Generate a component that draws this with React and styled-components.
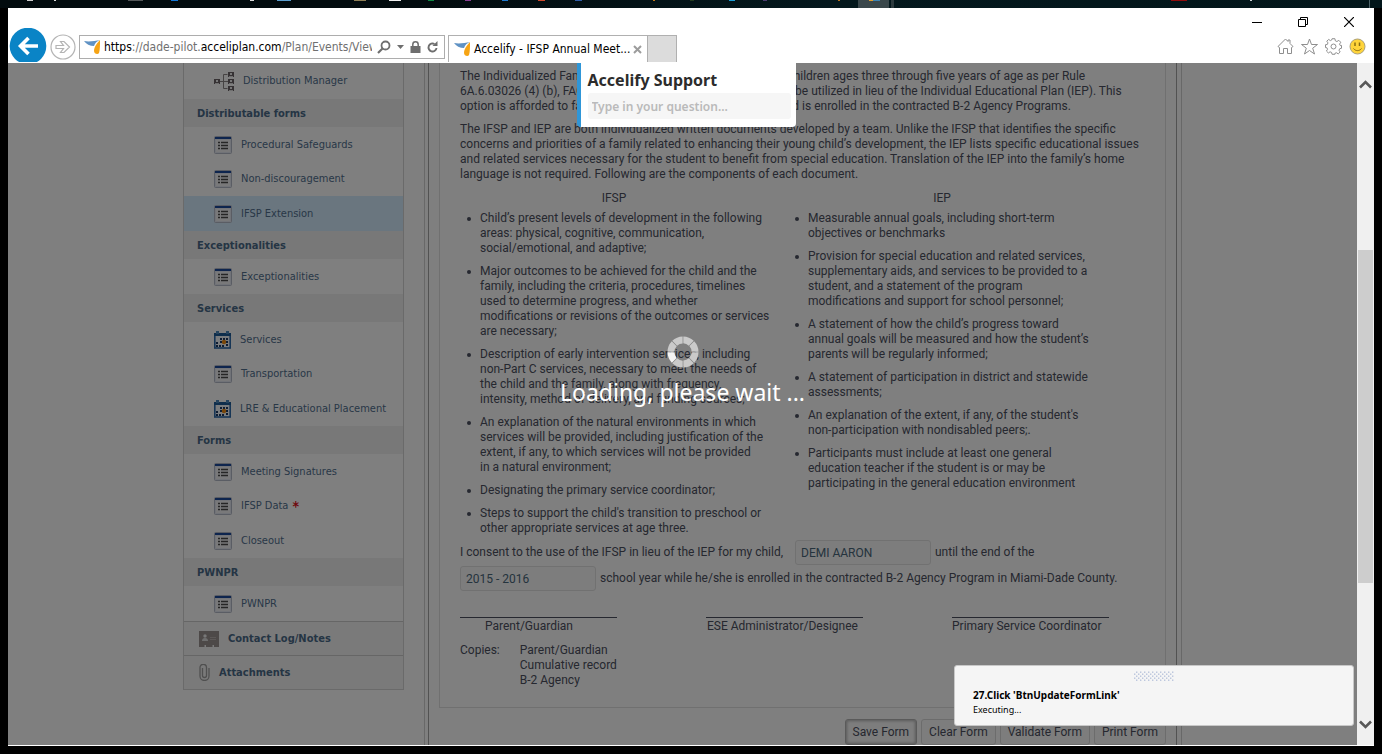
import React from 'react';
import styled, { createGlobalStyle } from 'styled-components';

const GlobalStyle = createGlobalStyle`
  * { box-sizing: border-box; }
  html, body { margin: 0; padding: 0; background: #000; }
  ul, h1, h2, h3, p { margin: 0; padding: 0; }
  button, input { font: inherit; color: inherit; }
  svg { display: block; flex: none; }
  a { color: inherit; text-decoration: none; }
`;

const bodyFont = 'Roboto, "Liberation Sans", sans-serif';
const navFont = '"DejaVu Sans Condensed", "DejaVu Sans", sans-serif';
const uiFont = '"Noto Sans", "Open Sans", sans-serif';

/* ---------- desktop and window ---------- */

const Desktop = styled.div`
  display: flex;
  flex-direction: column;
  height: 100vh;
  background: #000;
`;

const Taskbar = styled.div`
  height: 8px;
  overflow: hidden;
  background: linear-gradient(90deg, #020b0e 0, #020b0e 30%, #04181d 60%, #02161a 100%);
`;

const BrowserWindow = styled.div`
  position: relative;
  flex: 1;
  min-height: 0;
  display: flex;
  flex-direction: column;
  margin: 0 8px 8px;
  padding-bottom: 1px;
  background: #fff;
`;

const Chrome = styled.header`
  display: flex;
  justify-content: space-between;
  height: 55px;
  padding-bottom: 1px;
`;

const NavBar = styled.div`
  display: flex;
  align-items: flex-end;
  min-width: 0;
  flex: 1;
`;

const RoundButton = styled.button`
  padding: 0;
  border: 0;
  background: none;
  margin: ${(p) => (p.$raised ? '0 3px 2px 3px' : '0 0 0 1px')};
`;

const AddressBar = styled.div`
  display: flex;
  align-items: center;
  flex: 0 1 366px;
  min-width: 0;
  height: 24px;
  margin-bottom: 3px;
  padding: 0 6px 0 4px;
  border: 1px solid #adadad;
  color: #707070;
  font: 12px/20px ${navFont};
`;

const Url = styled.div`
  flex: 1;
  min-width: 0;
  margin-left: 3px;
  overflow: hidden;
  white-space: nowrap;
  b { color: #000; font-weight: 400; }
`;

const AddressTools = styled.div`
  display: flex;
  align-items: center;
  gap: 6px;
  margin-left: 5px;
`;

const IconButton = styled.button`
  display: flex;
  padding: 0;
  border: 0;
  background: none;
`;

const Tabs = styled.div`
  display: flex;
  height: 27px;
  margin-left: 3px;
`;

const Tab = styled.div`
  display: flex;
  align-items: center;
  gap: 3px;
  width: 200px;
  padding: 0 6px 0 5px;
  border: 1px solid #b0b0b0;
  border-bottom: 0;
  color: #000;
  font: 12px/20px ${navFont};
  white-space: nowrap;
`;

const NewTab = styled.button`
  width: 29px;
  padding: 0;
  border: 1px solid #b0b0b0;
  border-width: 1px 1px 0 0;
  background: #dcdcdc;
`;

const ChromeRight = styled.div`
  display: flex;
  flex-direction: column;
  justify-content: space-between;
  align-items: flex-end;
`;

const WindowControls = styled.div`
  display: flex;
  padding-right: 2px;
`;

const WindowButton = styled.button`
  display: flex;
  align-items: center;
  justify-content: center;
  width: 46px;
  height: 28px;
  padding: 0;
  border: 0;
  background: none;
`;

const ToolIcons = styled.div`
  display: flex;
  gap: 7px;
  padding: 0 8px 7px 0;
`;

const Viewport = styled.div`
  flex: 1;
  min-height: 0;
  display: flex;
`;

const Page = styled.div`
  position: relative;
  flex: 1;
  min-width: 0;
  overflow: hidden;
  background: #fff;
`;

/* ---------- scroll bar ---------- */

const ScrollBar = styled.div`
  display: flex;
  flex-direction: column;
  align-items: center;
  width: 17px;
  padding: 12px 0;
  background: #f0f0f0;
`;

const ScrollButton = styled.button`
  display: flex;
  align-items: center;
  justify-content: center;
  width: 17px;
  height: 18px;
  padding: 0;
  border: 0;
  background: none;
`;

const TrackPart = styled.div`
  flex: ${(p) => p.$share};
`;

const Thumb = styled.div`
  flex: 334;
  width: 15px;
  background: #cdcdcd;
`;

/* ---------- page ---------- */

const Columns = styled.div`
  display: flex;
  align-items: flex-start;
  gap: 20px;
  max-width: 999px;
  min-height: 100%;
  margin: 0 auto;
`;

const Sidebar = styled.nav`
  width: 221px;
  flex: none;
  border: 1px solid #d4d4d4;
  border-top: 0;
  color: #52708f;
  font: 11px/16px ${navFont};
`;

const GroupTitle = styled.h2`
  height: 28px;
  padding-left: 13px;
  background: #f0f0f0;
  color: #4a6a89;
  font-size: 11px;
  line-height: 29px;
`;

const Group = styled.ul`
  list-style: none;
  &:first-child { padding-bottom: 1px; }
`;

const Item = styled.li`
  height: 35px;
  background: ${(p) => (p.$active ? '#d4ecfe' : 'none')};
  &:nth-child(3n + 2) { height: 34px; }
`;

const ItemLink = styled.a`
  display: flex;
  align-items: center;
  gap: 9px;
  height: 100%;
  padding-left: 30px;
`;

const Required = styled.span`
  margin-left: -5px;
  color: #e01020;
  font-weight: 700;
  font-size: 14px;
`;

const SectionLink = styled.a`
  display: flex;
  align-items: center;
  gap: 9px;
  height: 34px;
  padding-left: 15px;
  border-top: 1px solid #ccc;
  background: #f4f4f4;
  color: #4a6a89;
  font-weight: 700;
`;

const Main = styled.main`
  flex: 1;
  align-self: stretch;
  min-width: 0;
  min-height: 682px;
  padding: 0 4px 0 3px;
  border: 1px solid #d0d0d0;
  border-width: 0 1px;
`;

const MainInner = styled.div`
  height: 100%;
  padding: 0 10px;
  border: 1px solid #a4a4a4;
  border-width: 0 1px;
`;

const Form = styled.form`
  padding: 6px 20px 19px;
  border: 1px solid #e0e0e0;
  border-top: 0;
  color: #4c5060;
  font: 12px/15px ${bodyFont};
`;

const Paragraph = styled.p`
  margin-bottom: 8px;
  white-space: nowrap;
`;

const Comparison = styled.div`
  display: flex;
  gap: 20px;
  margin-top: 9px;
`;

const Side = styled.section`
  width: 308px;
`;

const SideTitle = styled.h3`
  margin-bottom: 5px;
  font-size: 12px;
  font-weight: 400;
  text-align: center;
`;

const Bullets = styled.ul`
  display: flex;
  flex-direction: column;
  gap: 8px;
  list-style: none;
`;

const Bullet = styled.li`
  display: flex;
  align-items: flex-start;
  white-space: nowrap;
  &::before {
    content: '';
    flex: none;
    width: 4px;
    height: 4px;
    margin: 6px 9px 0 7px;
    border-radius: 50%;
    background: #4c5060;
  }
`;

const Consent = styled.div`
  display: flex;
  flex-direction: column;
  gap: 1px;
  margin-top: 4px;
`;

const ConsentLine = styled.label`
  display: flex;
  align-items: center;
  gap: 4px;
  white-space: nowrap;
`;

const ConsentLead = styled.span`
  min-width: 331px;
`;

const Field = styled.input`
  width: 136px;
  height: 25px;
  padding: 0 5px;
  border: 1px solid #e2e2e2;
  border-radius: 3px;
  background: #fafafa;
  color: #4a687c;
`;

const Signatures = styled.div`
  display: grid;
  grid-template-columns: repeat(3, 157px);
  column-gap: 89px;
  margin-top: 26px;
`;

const Signature = styled.div`
  padding: 1px ${(p) => p.$inset}px 0;
  border-top: 1px solid #4c5060;
  white-space: nowrap;
`;

const Copies = styled.div`
  display: flex;
  gap: 20px;
  margin-top: 9px;
  ul { list-style: none; }
`;

const Actions = styled.div`
  display: flex;
  justify-content: flex-end;
  gap: 4px;
  margin-top: 11px;
`;

const ActionButton = styled.button`
  height: 26px;
  padding: 0 7px;
  border: 1px solid ${(p) => (p.$focused ? '#b4b4b4' : '#d8d8d8')};
  border-radius: 3px;
  background: #fafafa;
  box-shadow: ${(p) => (p.$focused ? 'inset 0 0 3px 1px #b4b4b4' : 'none')};
  color: #4c5060;
  font: 12px/16px ${bodyFont};
`;

/* ---------- layers over the page ---------- */

const LoadingLayer = styled.div`
  position: absolute;
  inset: 0;
  display: flex;
  flex-direction: column;
  align-items: center;
  justify-content: center;
  gap: 7px;
  padding-bottom: 63px;
  background: rgba(0, 0, 0, 0.5);
  color: #fff;
  font: 23px/34px ${uiFont};
`;

const SupportBox = styled.div`
  position: absolute;
  top: 0;
  left: 50%;
  width: 219px;
  height: 64px;
  margin-left: -106px;
  padding: 4px 5px 7px 7px;
  border-left: 4px solid #2f96d8;
  border-radius: 0 0 4px 4px;
  background: #fff;
  label {
    display: block;
    color: #2c2c2c;
    font: 700 16px/26px ${uiFont};
  }
`;

const QuestionInput = styled.input`
  display: block;
  width: 100%;
  height: 26px;
  padding: 0 4px;
  border: 0;
  border-radius: 3px;
  background: #f6f6f6;
  font: 600 12px/20px ${uiFont};
  &::placeholder { color: #bababa; opacity: 1; }
`;

const Toast = styled.div`
  position: absolute;
  right: 20px;
  bottom: 20px;
  width: 400px;
  height: 61px;
  padding: 5px 18px;
  border: 1px solid #c8c8c8;
  border-radius: 3px;
  background: #f5f5f5;
  color: #000;
  font: 9px/14px ${uiFont};
  svg { margin: 0 auto 6px; }
  strong {
    display: block;
    font-size: 10px;
    line-height: 15px;
  }
`;

/* ---------- drawings ---------- */

const slivers = [
  [27, 6, 1, '#cfcfcf'], [54, 2, 1, '#ddd'], [128, 15, 1, '#55585a'], [171, 7, 1, '#1478d8'],
  [250, 4, 1, '#ddd'], [277, 14, 1, '#5c9fd0'], [354, 12, 1, '#8f7f56'], [389, 12, 1, '#f0f0f0'],
  [428, 6, 1, '#0f8a44'], [465, 6, 1, '#8a3f94'], [502, 6, 1, '#1f7ad0'], [538, 7, 1, '#d0492c'],
  [575, 7, 1, '#2f5ca8'], [653, 2, 1, '#c07818'], [690, 4, 1, '#243c20'], [729, 6, 1, '#1b9fd8'],
  [763, 4, 1, '#4c3c70'], [838, 2, 1, '#b8741c'], [858, 31, 8, '#3a474b'], [869, 4, 1, '#e0a030'],
  [873, 7, 1, '#3c84b4'], [891, 3, 8, '#2c3a3e'], [1171, 16, 1, '#900c0c'], [1250, 2, 1, '#cfd4d8'],
  [1369, 1, 8, '#4c6268'],
];

const TaskbarArt = () => (
  <svg width="1382" height="8" aria-hidden="true">
    {slivers.map(([x, w, h, c]) => <rect key={x} x={x} y="0" width={w} height={h} fill={c} />)}
  </svg>
);

const BrandMark = () => (
  <svg width="17" height="16" viewBox="0 0 17 16">
    <path d="M0 2C5 3 11 2 16 1c-3 1-5 3-6 6C6 7 2 5 0 2z" fill="#5f92c4" />
    <path d="M16 1c0 5 0 10-1 13-1 2-5 1-5-2 0-4 3-8 6-11z" fill="#f6a414" />
  </svg>
);

const FormIcon = () => (
  <svg width="18" height="18" viewBox="0 0 18 18">
    <rect x="0.5" y="0.5" width="17" height="17" rx="1" fill="#e2e6f0" stroke="#b4bac8" />
    <rect x="2" y="4" width="14" height="12" fill="#f2f2f4" />
    <rect x="1" y="1" width="16" height="2" fill="#1c4a9c" />
    <path d="M4 6.5h2M4 9.5h2M4 12.5h2M7 6.5h7M7 9.5h7M7 12.5h7" stroke="#4c4c4c" strokeWidth="1.4" />
  </svg>
);

const CalendarIcon = () => (
  <svg width="17" height="18" viewBox="0 0 17 18">
    <rect x="0.8" y="3" width="15.4" height="14" fill="#f4f8fc" stroke="#2f6cac" strokeWidth="1.6" />
    <rect x="0" y="2" width="17" height="3" fill="#1f5c98" />
    <path d="M2 0h3v3H2zM12 0h3v3h-3z" fill="#4c88bc" />
    {[[6, 7], [9, 7], [12, 7], [6, 10], [9, 10], [12, 10], [2, 11], [2, 14], [5, 14], [8, 14], [12, 13]].map(([x, y]) => (
      <rect key={`${x}-${y}`} x={x} y={y} width="2" height="2" fill="#1d3a66" />
    ))}
    <circle cx="10" cy="11" r="2.2" fill="#f08c10" />
  </svg>
);

const Person = ({ x, y }) => (
  <g transform={`translate(${x} ${y})`}>
    <rect width="6" height="5" fill="#6c6468" />
    <rect x="2" y="1" width="2" height="2" fill="#eee" />
    <rect x="1" y="4" width="4" height="1" fill="#ddd" />
  </g>
);

const DistributionIcon = () => (
  <svg width="20" height="20" viewBox="0 0 20 20">
    <path d="M6 10.5h8M9.5 3.500v14M9.500 3.500h4M9.500 17.500h4" fill="none" stroke="#8c8686" />
    <Person x="0" y="8" /><Person x="14" y="1" /><Person x="14" y="8" /><Person x="14" y="15" />
  </svg>
);

const ContactIcon = () => (
  <svg width="20" height="16" viewBox="0 0 20 16">
    <path d="M0 0h20v16h-5v-2h-1.500v2H7v-2H5.500v2H0z" fill="#9a9290" />
    <circle cx="6" cy="5" r="1.700" fill="#eee" />
    <path d="M3 10c0-2 1-3 3-3s3 1 3 3z" fill="#ddd" />
    <path d="M11 6h6v1h-6zM11 8h6v1h-6z" fill="#b8b0ae" />
  </svg>
);

const ClipIcon = () => (
  <svg width="11" height="17" viewBox="0 0 11 17" fill="none" stroke="#a0a0a0" strokeWidth="1.300">
    <path d="M3.500 4v7.500a2 2 0 0 0 4 0V3.500a2.700 2.700 0 0 0-6.500 0V12a4.500 4.500 0 0 0 9 0V4" />
  </svg>
);

const BackIcon = () => (
  <svg width="38" height="34" viewBox="0 0 38 34">
    <circle cx="19" cy="18" r="18.300" fill="#0a84c6" />
    <path d="M29 18H12M19.500 10l-8 8 8 8" fill="none" stroke="#fff" strokeWidth="3.600" />
  </svg>
);

const ForwardIcon = () => (
  <svg width="26" height="26" viewBox="0 0 26 26" fill="#fff" stroke="#b4b4b4" strokeWidth="1.200">
    <circle cx="13" cy="13" r="12" />
    <path d="M6 11.500h7.500l-3-4h3.500l5.500 5.500-5.500 5.500h-3.500l3-4H6z" />
  </svg>
);

const SearchIcon = () => (
  <svg width="14" height="14" viewBox="0 0 14 14" fill="none" stroke="#6e6e6e">
    <circle cx="8.500" cy="5.500" r="4" strokeWidth="1.800" />
    <path d="M5.500 8.500L1 13" strokeWidth="2.200" />
  </svg>
);

const CaretIcon = () => (
  <svg width="7" height="4" viewBox="0 0 7 4"><path d="M0 0h7L3.500 4z" fill="#6e6e6e" /></svg>
);

const LockIcon = () => (
  <svg width="11" height="12" viewBox="0 0 11 12">
    <rect x="0.500" y="5" width="10" height="7" fill="#6e6e6e" />
    <path d="M2.800 6V3.500a2.700 2.700 0 0 1 5.400 0V6" fill="none" stroke="#6e6e6e" strokeWidth="1.500" />
  </svg>
);

const RefreshIcon = () => (
  <svg width="11" height="12" viewBox="0 0 11 12">
    <path d="M9.500 7a4 4 0 1 1-2-4" fill="none" stroke="#6e6e6e" strokeWidth="1.900" />
    <path d="M10.500 0v5H5.500z" fill="#6e6e6e" />
  </svg>
);

const CrossIcon = () => (
  <svg width="9" height="9" viewBox="0 0 9 9"><path d="M1 1l7 7M8 1L1 8" stroke="#9c9c9c" strokeWidth="2" /></svg>
);

const HomeIcon = () => (
  <svg width="17" height="17" viewBox="0 0 17 17" fill="none" stroke="#8e8e8e">
    <path d="M1 8.500L8.500 1l2.500 2.500V2h2v3.500l3 3-1.500 1V15.500h-4v-5h-4v5h-4v-6z" />
  </svg>
);

const StarIcon = () => (
  <svg width="17" height="17" viewBox="0 0 17 17" fill="none" stroke="#8e8e8e">
    <path d="M8.500 1l2 5.500h6l-4.800 3.700 1.800 5.800-5-3.500-5 3.500 1.800-5.800L.500 6.500h6z" />
  </svg>
);

const GearIcon = () => (
  <svg width="17" height="17" viewBox="0 0 24 24" fill="none" stroke="#8e8e8e" strokeWidth="1.400">
    <path d="M10 1h4l.6 3 2.200 1 2.700-1.700 2.700 2.700L20.500 8.700l.8 1.700 2 .1v4l-2.500.6-1 2.200 1.600 2.400-2.700 2.700-2.600-1.600-2.100.9L14 23h-4l-.7-2.600-2.100-.9-2.500 1.600L2 18.400l1.600-2.500-.9-2.100L.7 13.500v-4l2.500-.3 1-2.300L2.500 4.500 5.200 2 7.600 3.700l1.900-.9z" />
    <circle cx="12" cy="12" r="3.500" />
  </svg>
);

const SmileyIcon = () => (
  <svg width="17" height="17" viewBox="0 0 17 17">
    <circle cx="8.500" cy="8.500" r="7.500" fill="#ffd43a" stroke="#aaa07a" />
    <path d="M6 4.500v3.500M10.500 4.500v3.500" stroke="#8a6d10" strokeWidth="1.500" />
    <path d="M4.500 10.500c2 2.800 6 2.800 8 0" fill="none" stroke="#8a6d10" />
  </svg>
);

const Chevron = ({ down }) => (
  <svg width="13" height="9" viewBox="0 0 13 9">
    <path d={down ? 'M1 1.500l5.500 5.500L12 1.500' : 'M1 7.500L6.500 2 12 7.500'} fill="none" stroke="#585858" strokeWidth="2.600" />
  </svg>
);

const Spinner = () => (
  <svg width="32" height="32" viewBox="0 0 32 32">
    {[0, 45, 90, 135, 180, 225, 270, 315].map((a) => (
      <path
        key={a}
        d="M16.300 0.500A15.500 15.500 0 0 1 26.700 4.800L21.800 9.700A8.700 8.700 0 0 0 16.300 7.300z"
        transform={`rotate(${a} 16 16)`}
        fill={a === 225 ? '#f4f4f4' : '#cacaca'}
      />
    ))}
  </svg>
);

const Grip = () => (
  <svg width="40" height="11" viewBox="0 0 40 11">
    {[0, 1, 2, 3, 4].flatMap((r) =>
      Array.from({ length: 10 }, (_, c) => (
        <rect key={`${r}-${c}`} x={c * 4 + (r % 2 ? 0 : 2)} y={r * 2 + 0.5} width="1.400" height="1.400" fill="#b8c4dc" />
      ))
    )}
  </svg>
);

/* ---------- content ---------- */

const groups = [
  { items: [['Distribution Manager', DistributionIcon]] },
  { title: 'Distributable forms', items: [['Procedural Safeguards', FormIcon], ['Non-discouragement', FormIcon], ['IFSP Extension', FormIcon]] },
  { title: 'Exceptionalities', items: [['Exceptionalities', FormIcon]] },
  { title: 'Services', items: [['Services', CalendarIcon], ['Transportation', FormIcon], ['LRE & Educational Placement', CalendarIcon]] },
  { title: 'Forms', items: [['Meeting Signatures', FormIcon], ['IFSP Data', FormIcon, true], ['Closeout', FormIcon]] },
  { title: 'PWNPR', items: [['PWNPR', FormIcon]] },
];

const intro = [
  [
    'The Individualized Family Service Plan (IFSP) for their eligible children ages three through five years of age as per Rule',
    '6A.6.03026 (4) (b), FAC, for their students with disabilities may be utilized in lieu of the Individual Educational Plan (IEP). This',
    'option is afforded to families whose young child is qualified and is enrolled in the contracted B-2 Agency Programs.',
  ],
  [
    'The IFSP and IEP are both individualized written documents developed by a team. Unlike the IFSP that identifies the specific',
    'concerns and priorities of a family related to enhancing their young child’s development, the IEP lists specific educational issues',
    'and related services necessary for the student to benefit from special education. Translation of the IEP into the family’s home',
    'language is not required. Following are the components of each document.',
  ],
];

const ifsp = [
  ['Child’s present levels of development in the following', 'areas: physical, cognitive, communication,', 'social/emotional, and adaptive;'],
  ['Major outcomes to be achieved for the child and the', 'family, including the criteria, procedures, timelines', 'used to determine progress, and whether', 'modifications or revisions of the outcomes or services', 'are necessary;'],
  ['Description of early intervention services, including', 'non-Part C services, necessary to meet the needs of', 'the child and the family, along with frequency,', 'intensity, method of delivery, and funding sources;'],
  ['An explanation of the natural environments in which', 'services will be provided, including justification of the', 'extent, if any, to which services will not be provided', 'in a natural environment;'],
  ['Designating the primary service coordinator;'],
  ["Steps to support the child's transition to preschool or", 'other appropriate services at age three.'],
];

const iep = [
  ['Measurable annual goals, including short-term', 'objectives or benchmarks'],
  ['Provision for special education and related services,', 'supplementary aids, and services to be provided to a', 'student, and a statement of the program', 'modifications and support for school personnel;'],
  ['A statement of how the child’s progress toward', 'annual goals will be measured and how the student’s', 'parents will be regularly informed;'],
  ['A statement of participation in district and statewide', 'assessments;'],
  ["An explanation of the extent, if any, of the student's", 'non-participation with nondisabled peers;.'],
  ['Participants must include at least one general', 'education teacher if the student is or may be', 'participating in the general education environment'],
];

const Lines = ({ lines }) => (
  <span>
    {lines.map((line, i) => (
      <React.Fragment key={line}>{i > 0 && <br />}{line}</React.Fragment>
    ))}
  </span>
);

const BulletSide = ({ title, items }) => (
  <Side>
    <SideTitle>{title}</SideTitle>
    <Bullets>
      {items.map((lines) => <Bullet key={lines[0]}><Lines lines={lines} /></Bullet>)}
    </Bullets>
  </Side>
);

export default function App() {
  return (
    <>
      <GlobalStyle />
      <Desktop>
        <Taskbar><TaskbarArt /></Taskbar>
        <BrowserWindow>
          <Chrome>
            <NavBar>
              <RoundButton aria-label="Back"><BackIcon /></RoundButton>
              <RoundButton $raised aria-label="Forward"><ForwardIcon /></RoundButton>
              <AddressBar>
                <BrandMark />
                <Url role="textbox" aria-label="Address">
                  <b>https</b>://dade-pilot.<b>acceliplan.com</b>/Plan/Events/View
                </Url>
                <AddressTools>
                  <IconButton aria-label="Search"><SearchIcon /></IconButton>
                  <IconButton aria-label="Show addresses"><CaretIcon /></IconButton>
                  <IconButton aria-label="Security"><LockIcon /></IconButton>
                  <IconButton aria-label="Refresh"><RefreshIcon /></IconButton>
                </AddressTools>
              </AddressBar>
              <Tabs>
                <Tab>
                  <BrandMark />
                  <span>Accelify - IFSP Annual Meet...</span>
                  <IconButton aria-label="Close tab"><CrossIcon /></IconButton>
                </Tab>
                <NewTab aria-label="New tab" />
              </Tabs>
            </NavBar>
            <ChromeRight>
              <WindowControls>
                <WindowButton aria-label="Minimize">
                  <svg width="10" height="10"><path d="M0 5.500h10" stroke="#000" /></svg>
                </WindowButton>
                <WindowButton aria-label="Restore">
                  <svg width="10" height="10" fill="none" stroke="#000">
                    <path d="M0.500 2.500h7v7h-7zM2.500 2.500v-2h7v7h-2" />
                  </svg>
                </WindowButton>
                <WindowButton aria-label="Close">
                  <svg width="10" height="10"><path d="M0 0l10 10M10 0L0 10" stroke="#000" strokeWidth="1.200" /></svg>
                </WindowButton>
              </WindowControls>
              <ToolIcons>
                <IconButton aria-label="Home"><HomeIcon /></IconButton>
                <IconButton aria-label="Favorites"><StarIcon /></IconButton>
                <IconButton aria-label="Tools"><GearIcon /></IconButton>
                <IconButton aria-label="Send a smile"><SmileyIcon /></IconButton>
              </ToolIcons>
            </ChromeRight>
          </Chrome>

          <Viewport>
            <Page>
              <Columns>
                <Sidebar>
                  {groups.map(({ title, items }) => (
                    <React.Fragment key={title || 'top'}>
                      {title && <GroupTitle>{title}</GroupTitle>}
                      <Group>
                        {items.map(([label, Icon, required]) => (
                          <Item key={label} $active={label === 'IFSP Extension'}>
                            <ItemLink href="#">
                              <Icon />
                              {label}
                              {required && <Required>*</Required>}
                            </ItemLink>
                          </Item>
                        ))}
                      </Group>
                    </React.Fragment>
                  ))}
                  <SectionLink href="#"><ContactIcon />Contact Log/Notes</SectionLink>
                  <SectionLink href="#"><ClipIcon />Attachments</SectionLink>
                </Sidebar>

                <Main>
                  <MainInner>
                    <Form onSubmit={(e) => e.preventDefault()}>
                      {intro.map((lines) => <Paragraph key={lines[0]}><Lines lines={lines} /></Paragraph>)}
                      <Comparison>
                        <BulletSide title="IFSP" items={ifsp} />
                        <BulletSide title="IEP" items={iep} />
                      </Comparison>
                      <Consent>
                        <ConsentLine>
                          <ConsentLead>I consent to the use of the IFSP in lieu of the IEP for my child,</ConsentLead>
                          <Field defaultValue="DEMI AARON" />
                          until the end of the
                        </ConsentLine>
                        <ConsentLine>
                          <Field defaultValue="2015 - 2016" />
                          school year while he/she is enrolled in the contracted B-2 Agency Program in Miami-Dade County.
                        </ConsentLine>
                      </Consent>
                      <Signatures>
                        <Signature $inset={25}>Parent/Guardian</Signature>
                        <Signature $inset={1}>ESE Administrator/Designee</Signature>
                        <Signature $inset={0}>Primary Service Coordinator</Signature>
                      </Signatures>
                      <Copies>
                        <span>Copies:</span>
                        <ul>
                          <li>Parent/Guardian</li>
                          <li>Cumulative record</li>
                          <li>B-2 Agency</li>
                        </ul>
                      </Copies>
                    </Form>
                    <Actions>
                      <ActionButton $focused>Save Form</ActionButton>
                      <ActionButton>Clear Form</ActionButton>
                      <ActionButton>Validate Form</ActionButton>
                      <ActionButton>Print Form</ActionButton>
                    </Actions>
                  </MainInner>
                </Main>
              </Columns>

              <LoadingLayer role="status">
                <Spinner />
                Loading, please wait ...
              </LoadingLayer>
              <SupportBox>
                <label htmlFor="question">Accelify Support</label>
                <QuestionInput id="question" placeholder="Type in your question..." />
              </SupportBox>
            </Page>
            <ScrollBar>
              <ScrollButton aria-label="Scroll up"><Chevron /></ScrollButton>
              <TrackPart $share={157} />
              <Thumb />
              <TrackPart $share={132} />
              <ScrollButton aria-label="Scroll down"><Chevron down /></ScrollButton>
            </ScrollBar>
          </Viewport>

          <Toast role="status">
            <Grip />
            <strong>27.Click 'BtnUpdateFormLink'</strong>
            Executing...
          </Toast>
        </BrowserWindow>
      </Desktop>
    </>
  );
}
